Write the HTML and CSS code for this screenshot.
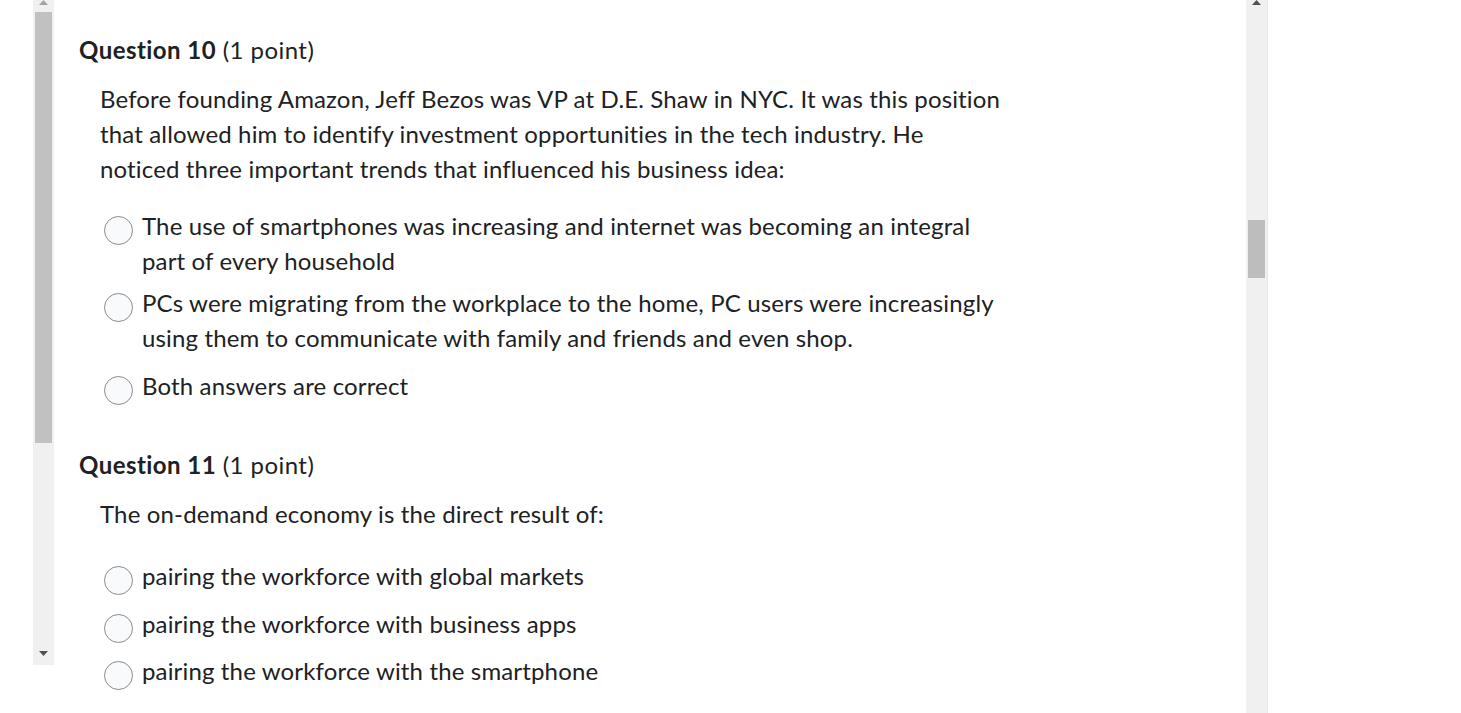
FILE: index.html
```html
<!DOCTYPE html>
<html lang="en">
<head>
<meta charset="utf-8">
<title>Quiz</title>
<link rel="stylesheet" href="styles.css">
</head>
<body>
<div class="page">
  <div class="frame">
    <div class="inner-scroll">
      <svg class="arrow arrow-up" width="9" height="5" viewBox="0 0 9 5"><polygon points="0,5 9,5 4.5,0" fill="#a3a3a3"/></svg>
      <div class="inner-thumb"></div>
      <svg class="arrow arrow-down" width="9" height="5" viewBox="0 0 9 5"><polygon points="0,0 9,0 4.5,5" fill="#505050"/></svg>
    </div>
    <main class="content">
      <section class="question q10">
        <h2 class="q-title"><strong>Question 10</strong> (1 point)</h2>
        <p class="q-text">Before founding Amazon, Jeff Bezos was VP at D.E. Shaw in NYC. It was this position<br>that allowed him to identify investment opportunities in the tech industry. He<br>noticed three important trends that influenced his business idea:</p>
        <div class="options">
          <label class="option tight"><span class="radio"></span><span class="opt-text">The use of smartphones was increasing and internet was becoming an integral<br>part of every household</span></label>
          <label class="option"><span class="radio"></span><span class="opt-text">PCs were migrating from the workplace to the home, PC users were increasingly<br>using them to communicate with family and friends and even shop.</span></label>
          <label class="option"><span class="radio"></span><span class="opt-text">Both answers are correct</span></label>
        </div>
      </section>
      <section class="question q11">
        <h2 class="q-title"><strong>Question 11</strong> (1 point)</h2>
        <p class="q-text">The on-demand economy is the direct result of:</p>
        <div class="options">
          <label class="option"><span class="radio"></span><span class="opt-text">pairing the workforce with global markets</span></label>
          <label class="option"><span class="radio"></span><span class="opt-text">pairing the workforce with business apps</span></label>
          <label class="option"><span class="radio"></span><span class="opt-text">pairing the workforce with the smartphone</span></label>
        </div>
      </section>
    </main>
  </div>
  <div class="outer-scroll">
    <svg class="arrow outer-up" width="9" height="5" viewBox="0 0 9 5"><polygon points="0,5 9,5 4.5,0" fill="#505050"/></svg>
    <div class="outer-thumb"></div>
  </div>
</div>
</body>
</html>
```

FILE: styles.css
```css
html, body {
  margin: 0;
  padding: 0;
  background: #ffffff;
  overflow: hidden;
}
body {
  font-family: Lato, "Noto Sans", sans-serif;
  color: #202122;
}
.page {
  display: flex;
  width: 1461px;
  height: 713px;
  overflow: hidden;
}
.frame {
  width: 1246px;
  display: flex;
  align-items: flex-start;
}
.inner-scroll {
  margin-left: 33px;
  width: 21px;
  height: 665px;
  background: #f0f0f0;
  display: flex;
  flex-direction: column;
  align-items: center;
  position: relative;
}
.arrow {
  display: block;
}
.arrow-up {
  position: absolute;
  top: 0;
  left: 6px;
}
.arrow-down {
  position: absolute;
  top: 651px;
  left: 6px;
}
.inner-thumb {
  margin-top: 12px;
  width: 17px;
  height: 431px;
  background: #c1c1c1;
}
.content {
  padding-left: 25px;
  padding-top: 32px;
}
.question {
  display: flex;
  flex-direction: column;
}
.q11 {
  margin-top: 44px;
}
.q-title {
  margin: 0;
  font-size: 24px;
  line-height: 35px;
  font-weight: 400;
  letter-spacing: 0.45px;
}
.q-title strong {
  font-weight: 700;
}
.q-text {
  margin: 14px 0 0 21px;
  font-size: 24px;
  line-height: 35px;
  letter-spacing: 0.15px;
}
.q11 .q-text {
  margin-top: 14px;
}
.options {
  display: flex;
  flex-direction: column;
  gap: 13px;
  margin-left: 25px;
}
.q10 .options {
  margin-top: 22px;
}
.q11 .options {
  margin-top: 27px;
  gap: 12.5px;
}
.option {
  display: flex;
  align-items: flex-start;
  gap: 8px;
}
.option.tight {
  margin-bottom: -6px;
}
.radio {
  flex: none;
  box-sizing: border-box;
  width: 29px;
  height: 29px;
  margin-top: 8px;
  margin-bottom: -3px;
  margin-right: 1px;
  border: 1.5px solid #878b8e;
  border-radius: 50%;
  background: #f9fafc;
}
.opt-text {
  font-size: 24px;
  line-height: 35px;
  letter-spacing: 0.15px;
}
.outer-scroll {
  width: 21px;
  height: 713px;
  background: #f0f0f0;
  border-right: 1px solid #e8e8e8;
  position: relative;
  display: flex;
  flex-direction: column;
  align-items: center;
}
.outer-up {
  position: absolute;
  top: 0;
  left: 6px;
}
.outer-thumb {
  margin-top: 220px;
  width: 17px;
  height: 58px;
  background: #bdbdbd;
}
```
